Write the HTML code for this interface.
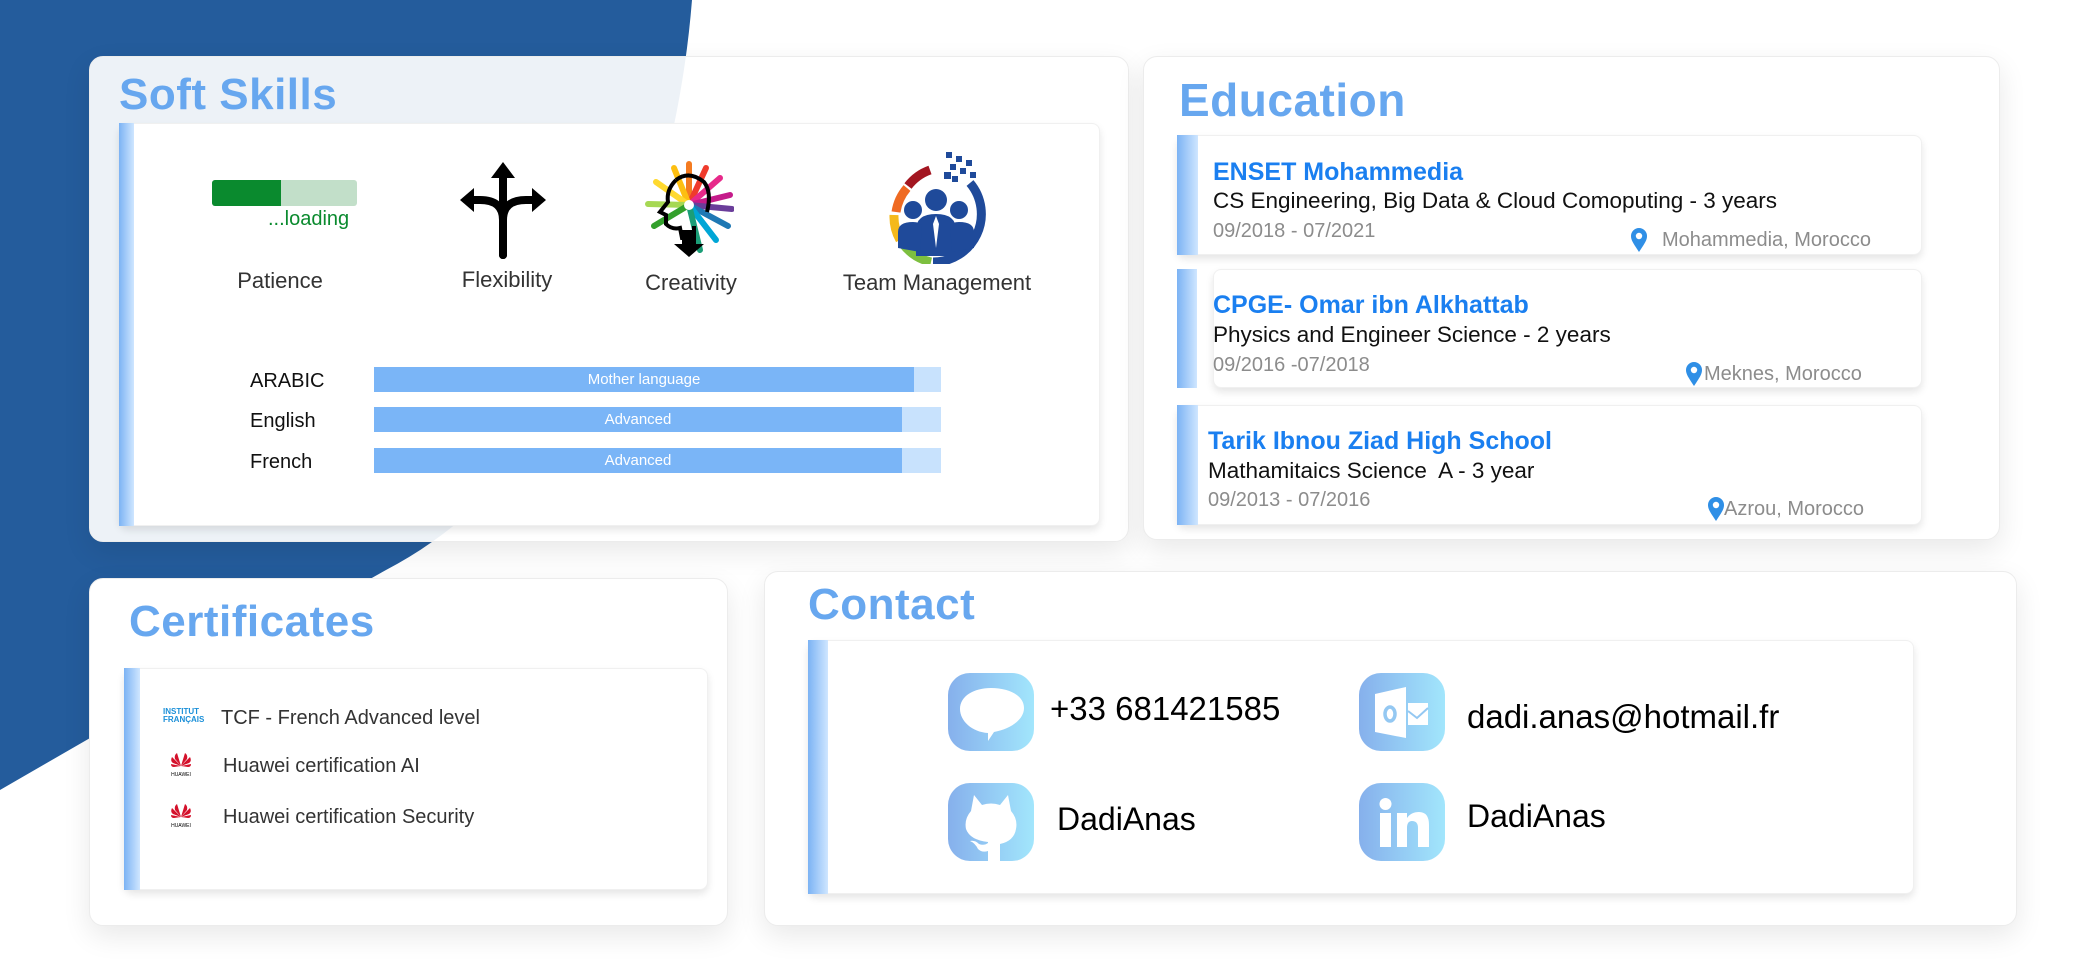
<!DOCTYPE html>
<html><head><meta charset="utf-8"><style>
*{margin:0;padding:0;box-sizing:border-box}
body{width:2084px;height:976px;background:#fff;position:relative;overflow:hidden;font-family:"Liberation Sans",sans-serif}
.a{position:absolute}
.card{position:absolute;border-radius:14px;box-shadow:0 10px 28px rgba(0,0,0,0.09);border:1px solid #ececec}
.panel{position:absolute;background:#fff;border-radius:8px;box-shadow:0 4px 8px rgba(0,0,0,0.10);border:1px solid #f0f0f0}
.bar{position:absolute;background:linear-gradient(90deg,#7cb3f4,#cfe6ff)}
.h{position:absolute;color:#67a7ef;font-weight:700;font-size:44px;letter-spacing:0.5px}
.lbl{position:absolute;font-size:22px;color:#333;white-space:nowrap;transform:translateX(-50%)}
.lang{position:absolute;left:250px;font-size:20px;color:#111}
.lb{position:absolute;left:374px;width:567px;height:25px;background:#c8e2fd}
.lf{position:absolute;left:0;top:0;height:25px;background:#7ab5f7;color:#fff;font-size:15px;text-align:center;line-height:25px}
.et{position:absolute;color:#1a7ff0;font-size:25px;font-weight:700;white-space:nowrap}
.e2{position:absolute;color:#111;font-size:22.5px;white-space:nowrap}
.ed{position:absolute;color:#8c8c8c;font-size:20px;white-space:nowrap}
.el{position:absolute;color:#8c8c8c;font-size:20px;white-space:nowrap}
.ct{position:absolute;font-size:20px;color:#333;white-space:nowrap}
.ic{position:absolute;width:86px;height:78px;border-radius:22px;background:linear-gradient(90deg,#86b0ec,#a2e6fc)}
.cx{position:absolute;font-size:33px;color:#000;white-space:nowrap}
</style></head><body>
<svg class="a" style="left:0;top:0" width="2084" height="976"><path d="M0 0 H692 C672 250 560 480 386 570 Q190 680 0 790 Z" fill="#245c9c"/></svg>

<!-- Soft skills -->
<div class="card" style="left:89px;top:56px;width:1040px;height:486px;background:rgba(255,255,255,0.92)"></div>
<div class="h" style="left:119px;top:70px">Soft Skills</div>
<div class="panel" style="left:119px;top:123px;width:981px;height:403px"></div>
<div class="bar" style="left:119px;top:123px;width:15px;height:403px"></div>
<div class="a" style="left:212px;top:180px;width:145px;height:26px;background:#c2dfc9;border-radius:3px;overflow:hidden"><div style="width:69px;height:26px;background:#0a8a2e"></div></div>
<div class="a" style="left:268px;top:208px;font-size:20px;color:#0a8a2e">...loading</div>
<div class="lbl" style="left:280px;top:268px">Patience</div>
<div class="lbl" style="left:507px;top:267px">Flexibility</div>
<div class="lbl" style="left:691px;top:270px">Creativity</div>
<div class="lbl" style="left:937px;top:270px">Team Management</div>
<svg class="a" style="left:458px;top:160px" width="90" height="100" viewBox="0 0 90 100"><g fill="none" stroke="#000" stroke-width="8" stroke-linecap="round"><path d="M45 95 V15"/><path d="M45 95 V60 Q45 40 22 40 H12"/><path d="M45 95 V60 Q45 40 68 40 H78"/></g><path d="M45 2 L33 18 H57 Z M2 40 L16 28 V52 Z M88 40 L74 28 V52 Z"/></svg>
<svg class="a" style="left:644px;top:160px" width="90" height="100" viewBox="0 0 90 100">
<g stroke-width="6" stroke-linecap="round">
<line x1="45" y1="45" x2="45" y2="4" stroke="#f47b20"/><line x1="45" y1="45" x2="62" y2="8" stroke="#ef3b2c"/><line x1="45" y1="45" x2="76" y2="18" stroke="#e7298a"/><line x1="45" y1="45" x2="86" y2="35" stroke="#c51b8a"/><line x1="45" y1="45" x2="88" y2="49" stroke="#6a3d9a"/><line x1="45" y1="45" x2="84" y2="66" stroke="#1f78b4"/><line x1="45" y1="45" x2="72" y2="80" stroke="#00a6d6"/><line x1="45" y1="45" x2="56" y2="90" stroke="#1b9e77"/><line x1="45" y1="45" x2="30" y2="8" stroke="#fdbf11"/><line x1="45" y1="45" x2="12" y2="22" stroke="#ffd92f"/><line x1="45" y1="45" x2="4" y2="44" stroke="#a6d854"/><line x1="45" y1="45" x2="10" y2="66" stroke="#33a02c"/></g>
<circle cx="45" cy="45" r="5" fill="#fff"/>
<path d="M32 20 Q45 10 60 22 Q68 32 63 52" fill="none" stroke="#000" stroke-width="4"/>
<path d="M32 20 Q22 30 24 42 L16 52 L22 55 L22 64 Q28 70 36 68 L38 78 H50 L50 66" fill="none" stroke="#000" stroke-width="4"/>
<path d="M38 70 H52 V84 H60 L45 97 L30 84 H38 Z"/>
</svg>
<svg class="a" style="left:886px;top:148px" width="100" height="116" viewBox="0 0 100 116">
<g fill="none" stroke-width="9"><path d="M22 38 A48 48 0 0 1 44 22" stroke="#a31621"/><path d="M10 64 A48 48 0 0 1 21 40" stroke="#ef6a22"/><path d="M14 92 A48 48 0 0 1 8 67" stroke="#f5b91b"/><path d="M45 114 A48 48 0 0 1 17 96" stroke="#7dbf3f"/><path d="M47 114 A48 48 0 0 0 84 35" stroke="#1f4a9a"/></g>
<g fill="#1f4a9a"><circle cx="50" cy="52" r="11"/><circle cx="27" cy="62" r="9"/><circle cx="73" cy="62" r="9"/><path d="M30 108 V82 Q30 66 50 66 Q70 66 70 82 V108 Z"/><path d="M12 100 V84 Q12 74 27 74 Q34 74 36 78 L34 104 Z"/><path d="M88 100 V84 Q88 74 73 74 Q66 74 64 78 L66 104 Z"/>
<rect x="60" y="4" width="6" height="6"/><rect x="70" y="8" width="6" height="6"/><rect x="80" y="12" width="6" height="6"/><rect x="64" y="16" width="6" height="6"/><rect x="58" y="24" width="7" height="7"/><rect x="74" y="20" width="6" height="6"/><rect x="84" y="24" width="6" height="6"/><rect x="66" y="28" width="6" height="6"/></g>
<path d="M50 68 L47 76 L50 100 L53 76 Z" fill="#fff"/></svg>
<div class="lang" style="top:370px">ARABIC</div>
<div class="lang" style="top:410px">English</div>
<div class="lang" style="top:451px">French</div>
<div class="lb" style="top:367px"><div class="lf" style="width:540px">Mother language</div></div>
<div class="lb" style="top:407px"><div class="lf" style="width:528px">Advanced</div></div>
<div class="lb" style="top:448px"><div class="lf" style="width:528px">Advanced</div></div>

<!-- Education -->
<div class="card" style="left:1143px;top:56px;width:857px;height:484px;background:#fff"></div>
<div class="h" style="left:1179px;top:73px;font-size:46px">Education</div>
<div class="panel" style="left:1177px;top:135px;width:745px;height:120px"></div>
<div class="bar" style="left:1177px;top:135px;width:21px;height:120px"></div>
<div class="et" style="left:1213px;top:158px">ENSET Mohammedia</div>
<div class="e2" style="left:1213px;top:188px">CS Engineering, Big Data &amp; Cloud Comoputing - 3 years</div>
<div class="ed" style="left:1213px;top:220px">09/2018 - 07/2021</div>
<div class="el" style="left:1662px;top:229px">Mohammedia, Morocco</div>
<div class="panel" style="left:1213px;top:269px;width:709px;height:119px"></div>
<div class="bar" style="left:1177px;top:269px;width:20px;height:119px"></div>
<div class="et" style="left:1213px;top:291px">CPGE- Omar ibn Alkhattab</div>
<div class="e2" style="left:1213px;top:322px">Physics and Engineer Science - 2 years</div>
<div class="ed" style="left:1213px;top:354px">09/2016 -07/2018</div>
<div class="el" style="left:1704px;top:363px">Meknes, Morocco</div>
<div class="panel" style="left:1177px;top:405px;width:745px;height:120px"></div>
<div class="bar" style="left:1177px;top:405px;width:21px;height:120px"></div>
<div class="et" style="left:1208px;top:427px">Tarik Ibnou Ziad High School</div>
<div class="e2" style="left:1208px;top:458px">Mathamitaics Science&nbsp; A - 3 year</div>
<div class="ed" style="left:1208px;top:489px">09/2013 - 07/2016</div>
<div class="el" style="left:1724px;top:498px">Azrou, Morocco</div>
<svg class="a" style="left:1630px;top:227px" width="18" height="26" viewBox="0 0 18 26"><path d="M9 25 C3 16 1 13 1 9 A8 8 0 0 1 17 9 C17 13 15 16 9 25Z" fill="#2f8fe6"/><circle cx="9" cy="9" r="3.2" fill="#fff"/></svg>
<svg class="a" style="left:1685px;top:361px" width="18" height="26" viewBox="0 0 18 26"><path d="M9 25 C3 16 1 13 1 9 A8 8 0 0 1 17 9 C17 13 15 16 9 25Z" fill="#2f8fe6"/><circle cx="9" cy="9" r="3.2" fill="#fff"/></svg>
<svg class="a" style="left:1707px;top:496px" width="18" height="26" viewBox="0 0 18 26"><path d="M9 25 C3 16 1 13 1 9 A8 8 0 0 1 17 9 C17 13 15 16 9 25Z" fill="#2f8fe6"/><circle cx="9" cy="9" r="3.2" fill="#fff"/></svg>

<!-- Certificates -->
<div class="card" style="left:89px;top:578px;width:639px;height:348px;background:#fff"></div>
<div class="h" style="left:129px;top:597px">Certificates</div>
<div class="panel" style="left:124px;top:668px;width:584px;height:222px"></div>
<div class="bar" style="left:124px;top:668px;width:16px;height:222px"></div>
<div class="a" style="left:163px;top:708px;font-size:8px;line-height:8px;color:#1a8fd8;font-weight:700;width:46px">INSTITUT<br>FRANÇAIS</div>
<svg class="a" style="left:170px;top:752px" width="22" height="26" viewBox="0 0 22 26"><g fill="#d4112b"><path d="M11 14 L7 1 Q4 3 5 7Z"/><path d="M11 14 L15 1 Q18 3 17 7Z"/><path d="M11 14 L2 5 Q0 9 3 11Z"/><path d="M11 14 L20 5 Q22 9 19 11Z"/><path d="M11 14 L1 12 Q1 15 4 15Z"/><path d="M11 14 L21 12 Q21 15 18 15Z"/></g><text x="11" y="24" font-size="5" text-anchor="middle" font-family="Liberation Sans">HUAWEI</text></svg>
<svg class="a" style="left:170px;top:803px" width="22" height="26" viewBox="0 0 22 26"><g fill="#d4112b"><path d="M11 14 L7 1 Q4 3 5 7Z"/><path d="M11 14 L15 1 Q18 3 17 7Z"/><path d="M11 14 L2 5 Q0 9 3 11Z"/><path d="M11 14 L20 5 Q22 9 19 11Z"/><path d="M11 14 L1 12 Q1 15 4 15Z"/><path d="M11 14 L21 12 Q21 15 18 15Z"/></g><text x="11" y="24" font-size="5" text-anchor="middle" font-family="Liberation Sans">HUAWEI</text></svg>
<div class="ct" style="left:221px;top:707px">TCF - French Advanced level</div>
<div class="ct" style="left:223px;top:755px">Huawei certification AI</div>
<div class="ct" style="left:223px;top:806px">Huawei certification Security</div>

<!-- Contact -->
<div class="card" style="left:764px;top:571px;width:1253px;height:355px;background:#fff"></div>
<div class="h" style="left:808px;top:580px">Contact</div>
<div class="panel" style="left:808px;top:640px;width:1106px;height:254px"></div>
<div class="bar" style="left:808px;top:640px;width:20px;height:254px"></div>
<div class="ic" style="left:948px;top:673px"><svg width="86" height="78" viewBox="0 0 86 78"><path d="M43 15 C62 15 76 23 76 35 C76 47 62 56 46 59 L40 68 L40 60 C24 59 12 48 12 36 C12 23 26 15 43 15Z" fill="#fff"/></svg></div>
<div class="ic" style="left:1359px;top:673px"><svg width="86" height="78" viewBox="0 0 86 78"><path d="M16 21 L47 14 V65 L16 59Z" fill="#fff"/><rect x="49" y="30" width="20" height="22" fill="#fff"/><path d="M49 38 L58 45 L69 35" stroke="#94c8f2" stroke-width="2" fill="none"/><ellipse cx="31" cy="41" rx="5" ry="7" fill="none" stroke="#94c8f2" stroke-width="3.5"/></svg></div>
<div class="ic" style="left:948px;top:783px"><svg width="86" height="78" viewBox="0 0 86 78"><path d="M26 12 L34 22 Q43 19 52 22 L60 12 L63 28 Q70 36 68 46 Q66 58 52 61 V78 H40 V68 Q34 70 30 66 Q27 60 22 58 Q27 57 31 61 Q36 63 40 60 L40 59 Q22 57 18 46 Q16 36 23 28Z" fill="#fff"/></svg></div>
<div class="ic" style="left:1359px;top:783px"><svg width="86" height="78" viewBox="0 0 86 78"><rect x="21" y="30" width="11" height="34" fill="#fff"/><circle cx="26.5" cy="21" r="6" fill="#fff"/><path d="M38 30 H48 V35 Q52 29 60 29 Q70 29 70 42 V64 H59 V45 Q59 38 53 38 Q48 38 48 45 V64 H38Z" fill="#fff"/></svg></div>
<div class="cx" style="left:1050px;top:690px">+33 681421585</div>
<div class="cx" style="left:1467px;top:698px">dadi.anas@hotmail.fr</div>
<div class="cx" style="left:1057px;top:801px;font-size:32px">DadiAnas</div>
<div class="cx" style="left:1467px;top:798px;font-size:32px">DadiAnas</div>
</body></html>
